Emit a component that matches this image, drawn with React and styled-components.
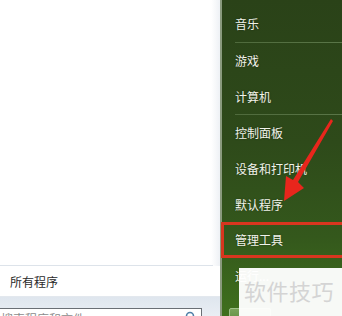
import React from 'react';
import styled, { createGlobalStyle } from 'styled-components';

const GlobalStyle = createGlobalStyle`
  html, body {
    margin: 0;
    padding: 0;
    overflow: hidden;
  }
  body {
    font-family: 'Noto Sans CJK SC', 'Noto Sans', sans-serif;
  }
`;

const MENU = styled.div`
  position: relative;
  display: flex;
  width: 342px;
  height: 316px;
  overflow: hidden;
  background: #ffffff;
`;

const LEFT = styled.div`
  display: flex;
  flex-direction: column;
  width: 220px;
  flex-shrink: 0;
  background: linear-gradient(90deg, #ffffff 0%, #ffffff 96%, #eef1f5 100%);
`;

const SPACER = styled.div`
  flex: 1;
`;

const RULE = styled.div`
  height: 1px;
  margin-right: 7px;
  background-color: #dde3ea;
`;

const ALLPROGRAMS = styled.div`
  height: 30px;
  display: flex;
  align-items: center;
  padding-left: 10px;
  font-size: 12px;
  color: #2a2a2a;
  background: #ffffff;
`;

const SEARCHBAND = styled.div`
  height: 20px;
  box-sizing: border-box;
  overflow: hidden;
  padding-top: 11px;
  background: linear-gradient(180deg, #dfe6ee 0%, #e9eef4 100%);
  border-top: 1px solid #e3e8ee;
`;

const SEARCHBOX = styled.div`
  display: flex;
  align-items: flex-start;
  justify-content: space-between;
  width: 206px;
  height: 20px;
  margin-left: -4px;
  box-sizing: border-box;
  border: 1px solid #6a6f75;
  background: #ffffff;
  padding: 1px 6px 0 4px;
  font-size: 12px;
  color: #8c8c8c;
`;

const RIGHT = styled.div`
  flex: 1;
  display: flex;
  flex-direction: column;
  padding-top: 6px;
  border-left: 2px solid #8a9a7e;
  background: linear-gradient(180deg, #2a4218 0%, #2e4a1a 45%, #34581c 75%, #3f701d 100%);
`;

const ITEM = styled.div`
  height: 35.7px;
  flex-shrink: 0;
  display: flex;
  align-items: center;
  font-size: 12px;
  color: #f1f3ea;
  text-shadow: 0 0 2px rgba(0, 0, 0, 0.4);
  box-sizing: border-box;
  border: ${(p) => (p.$boxed ? '3px solid #d8361f' : 'none')};
  border-right: none;
  padding-left: ${(p) => (p.$boxed ? '11px' : '13px')};
  margin-left: ${(p) => (p.$boxed ? '-1px' : '0')};
`;

const SEP = styled.div`
  height: 1px;
  flex-shrink: 0;
  margin-left: 13px;
  background: linear-gradient(90deg, #4f6a3c 0%, #5a7648 100%);
`;

const BUTTON = styled.div`
  width: 40px;
  height: 14px;
  flex-shrink: 0;
  margin: 14px 0 0 7px;
  border: 1px solid #9fc08a;
  border-radius: 2px;
  background: linear-gradient(180deg, #7aa25a 0%, #5c8a3c 100%);
`;

const WATERMARK = styled.div`
  position: absolute;
  left: 239px;
  top: 268px;
  width: 103px;
  height: 48px;
  display: flex;
  align-items: center;
  padding: 0 0 5px 5px;
  box-sizing: border-box;
  background: rgba(255, 255, 255, 0.96);
  font-size: 22px;
  letter-spacing: 0.5px;
  color: #d4d4d4;
`;

const ARROW = styled.svg`
  position: absolute;
  left: 0;
  top: 0;
  pointer-events: none;
`;

const rightItems = [
  { label: '音乐', sep: true },
  { label: '游戏' },
  { label: '计算机', sep: true },
  { label: '控制面板' },
  { label: '设备和打印机' },
  { label: '默认程序' },
  { label: '管理工具', boxed: true },
  { label: '运行...' },
];

export default function App() {
  return (
    <>
      <GlobalStyle />
      <MENU>
        <LEFT>
          <SPACER />
          <RULE />
          <ALLPROGRAMS>所有程序</ALLPROGRAMS>
          <SEARCHBAND>
            <SEARCHBOX>
              <span>搜索程序和文件</span>
              <svg width='10' height='10' viewBox='0 0 10 10'>
                <circle cx='5' cy='6' r='3.5' fill='none' stroke='#4f7fa8' strokeWidth='1.6' />
              </svg>
            </SEARCHBOX>
          </SEARCHBAND>
        </LEFT>
        <RIGHT>
          {rightItems.map((item) => (
            <React.Fragment key={item.label}>
              <ITEM $boxed={item.boxed}>{item.label}</ITEM>
              {item.sep && <SEP />}
            </React.Fragment>
          ))}
          <BUTTON />
        </RIGHT>
        <ARROW width='342' height='316' viewBox='0 0 342 316'>
          <polygon
            points='331,119 333,121 298,182 304,188 284,201 286,176 293,180'
            fill='#e8261c'
          />
        </ARROW>
        <WATERMARK>软件技巧</WATERMARK>
      </MENU>
    </>
  );
}
